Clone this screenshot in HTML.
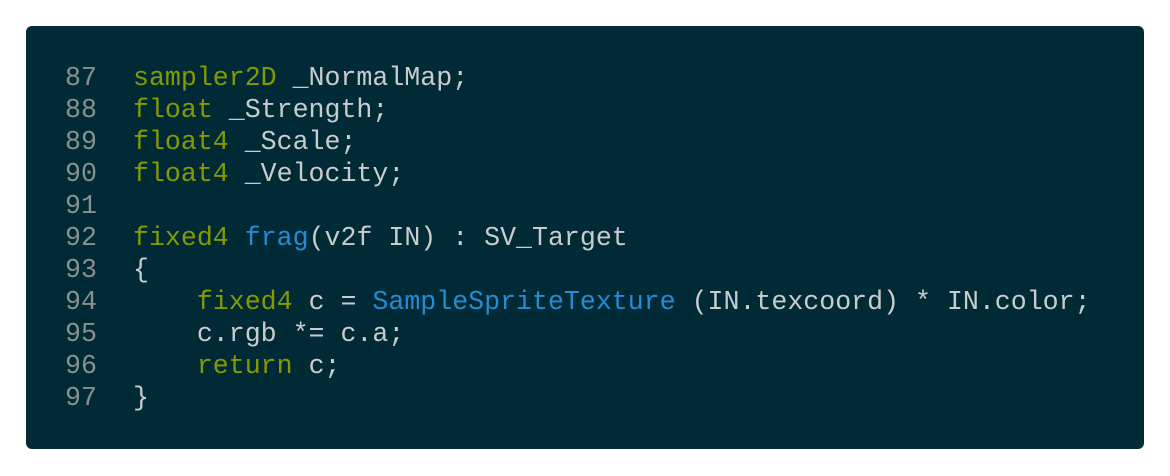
<!DOCTYPE html>
<html><head><style>
html,body{margin:0;padding:0;background:#fff;width:1170px;height:476px;overflow:hidden}
.box{position:absolute;left:26px;top:26px;width:1118px;height:423px;background:#012a37;border-radius:6px}
pre{margin:0;position:absolute;top:36px;font-family:"Liberation Mono","DejaVu Sans Mono",monospace;font-size:26.6px;line-height:32px;color:#c9cccc}
.ln{left:39px;color:#8a8f8f}
.code{left:107px}
.k{color:#859900}.f{color:#268bd2}
</style></head><body>
<div class="box">
<pre class="ln">87
88
89
90
91
92
93
94
95
96
97</pre>
<pre class="code"><span class="k">sampler2D</span> _NormalMap;
<span class="k">float</span> _Strength;
<span class="k">float4</span> _Scale;
<span class="k">float4</span> _Velocity;

<span class="k">fixed4</span> <span class="f">frag</span>(v2f IN) : SV_Target
{
    <span class="k">fixed4</span> c = <span class="f">SampleSpriteTexture</span> (IN.texcoord) * IN.color;
    c.rgb *= c.a;
    <span class="k">return</span> c;
}</pre>
</div>
</body></html>
